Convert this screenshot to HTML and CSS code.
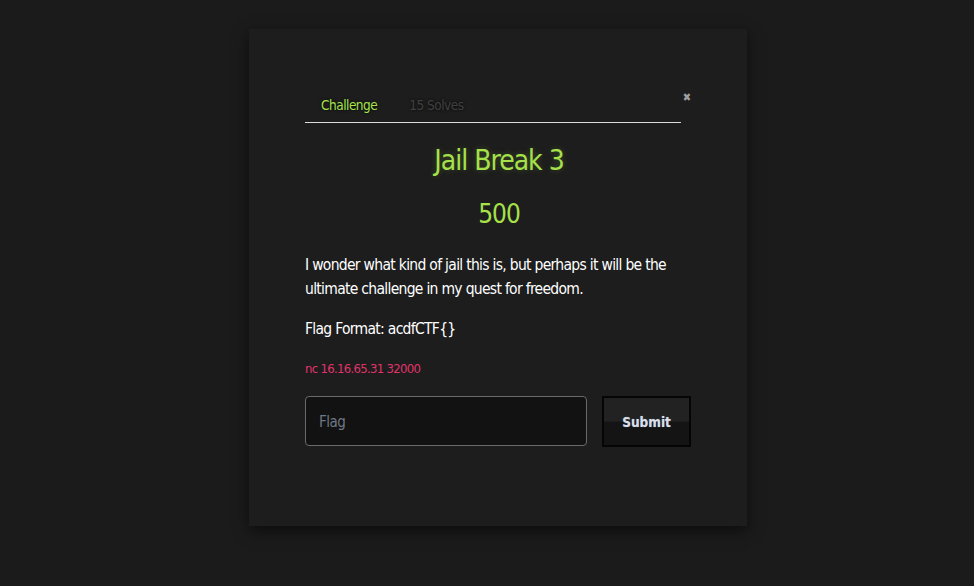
FILE: index.html
```html
<!DOCTYPE html>
<html>
<head>
<meta charset="utf-8">
<link rel="stylesheet" href="styles.css">
</head>
<body>
<div class="modal">
  <div class="head">
    <div class="tabs">
      <span class="tab active">Challenge</span>
      <span class="tab">15 Solves</span>
    </div>
    <span class="close">&#x2716;</span>
  </div>
  <h1 class="title">Jail Break 3</h1>
  <div class="points">500</div>
  <p class="desc">I wonder what kind of jail this is, but perhaps it will be the ultimate challenge in my quest for freedom.</p>
  <p class="desc">Flag Format: acdfCTF{}</p>
  <p class="code">nc 16.16.65.31 32000</p>
  <div class="form">
    <div class="input">Flag</div>
    <div class="btn">Submit</div>
  </div>
</div>
</body>
</html>
```
FILE: styles.css
```css
html, body { margin: 0; padding: 0; }
body {
  width: 974px; height: 586px;
  background: #1b1b1b;
  font-family: "DejaVu Sans Condensed", "DejaVu Sans", sans-serif;
  font-stretch: condensed;
  display: flex; justify-content: center; align-items: flex-start;
  overflow: hidden;
}
.modal {
  margin-top: 29px;
  margin-left: 22px;
  width: 498px; height: 497px;
  box-sizing: border-box;
  background: #1d1d1d;
  box-shadow: 0 5px 14px rgba(0,0,0,0.55);
  padding: 61px 52px 0 56px;
  display: flex; flex-direction: column;
}
.head { position: relative; width: 376px; border-bottom: 1px solid #dcdcdc; height: 32px; }
.tabs { display: flex; gap: 32px; padding-left: 16px; }
.tab { font-size: 13.5px; color: #404040; line-height: 31px; text-shadow: 0 0 3px rgba(0,0,0,.9); letter-spacing: -0.5px; }
.tab.active { color: #a6e14a; }
.close { position: absolute; right: -10px; top: 1px; color: #a0a0a0; font-size: 11px; }
.title { margin: 18px 0 0; width: 388px; text-align: center; color: #a6e14a; font-weight: normal; font-size: 28px; line-height: 40px; letter-spacing: -1px; text-shadow: 0 0 6px rgba(166,225,74,.25); }
.points { margin-top: 15px; width: 388px; text-align: center; color: #a6e14a; font-size: 26px; line-height: 36px; letter-spacing: -1px; }
.desc { margin: 21px 0 0; color: #fff; font-size: 15.5px; line-height: 24px; width: 376px; letter-spacing: -0.7px; }
.desc + .desc { margin-top: 16px; }
.code { margin: 18px 0 0; color: #e0336c; font-size: 13px; line-height: 20px; letter-spacing: -0.7px; }
.form { display: flex; gap: 15px; margin-top: 17px; }
.input { flex: 0 0 282px; height: 50px; box-sizing: border-box; border: 1px solid #6a6a6a; border-radius: 4px; background: #121212; color: #6f7884; font-size: 15px; line-height: 50px; padding-left: 13px; letter-spacing: -0.5px; }
.btn { flex: 0 0 89px; height: 51px; box-sizing: border-box; border: 2px solid #050505; background: linear-gradient(#222 0%, #222 48%, #141414 52%, #141414 100%); color: #d8dfe8; font-weight: bold; font-size: 13.5px; line-height: 49px; text-align: center; letter-spacing: 0; text-shadow: 0 0 1px rgba(150,180,220,.6); }
```
